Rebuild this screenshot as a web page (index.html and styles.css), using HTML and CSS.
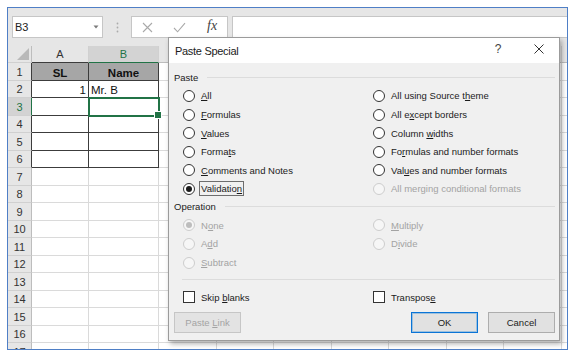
FILE: index.html
```html
<!DOCTYPE html>
<html lang="en">
<head>
<meta charset="utf-8">
<title>Paste Special</title>
<link rel="stylesheet" href="styles.css">
</head>
<body>
<div class="window">
  <div class="toolbar">
    <div class="namebox"><span class="ref">B3</span><svg class="dd" width="6" height="4" viewBox="0 0 6 4"><path d="M0.5 0.5H5.5L3 3.5Z" fill="#7a7a7a"/></svg></div>
    <div class="grip"><svg width="3" height="11" viewBox="0 0 3 11"><circle cx="1.5" cy="1.5" r="0.9" fill="#ababab"/><circle cx="1.5" cy="5.5" r="0.9" fill="#ababab"/><circle cx="1.5" cy="9.5" r="0.9" fill="#ababab"/></svg></div>
    <div class="fxbox">
      <span class="slot"><svg width="11" height="11" viewBox="0 0 11 11"><path d="M1 1L10 10M10 1L1 10" stroke="#a9a9a9" stroke-width="1.1" fill="none"/></svg></span>
      <span class="slot"><svg width="13" height="11" viewBox="0 0 13 11"><path d="M1 6L4.6 9.8L12 1.2" stroke="#a9a9a9" stroke-width="1.1" fill="none"/></svg></span>
      <span class="slot fx">fx</span>
    </div>
    <div class="formula"></div>
  </div>
  <div class="sheet">
    <div class="row"><span class="corner"></span><span class="ch ca tt">A</span><span class="ch cb sel">B</span><span class="ch"></span><span class="ch"></span><span class="ch"></span><span class="ch"></span><span class="ch"></span><span class="ch"></span><span class="ch"></span><span class="ch"></span></div>
    <div class="row"><span class="rh tl">1</span><span class="ca t th">SL</span><span class="cb t th">Name</span><span></span><span></span><span></span><span></span><span></span><span></span><span></span><span></span></div>
    <div class="row"><span class="rh tl">2</span><span class="ca t num">1</span><span class="cb t">Mr. B</span><span></span><span></span><span></span><span></span><span></span><span></span><span></span><span></span></div>
    <div class="row"><span class="rh tl sel">3</span><span class="ca t"></span><span class="cb t cur"></span><span></span><span></span><span></span><span></span><span></span><span></span><span></span><span></span></div>
    <div class="row"><span class="rh tl">4</span><span class="ca t"></span><span class="cb t"></span><span></span><span></span><span></span><span></span><span></span><span></span><span></span><span></span></div>
    <div class="row"><span class="rh tl">5</span><span class="ca t"></span><span class="cb t"></span><span></span><span></span><span></span><span></span><span></span><span></span><span></span><span></span></div>
    <div class="row"><span class="rh tl">6</span><span class="ca t"></span><span class="cb t"></span><span></span><span></span><span></span><span></span><span></span><span></span><span></span><span></span></div>
    <div class="row"><span class="rh">7</span><span class="ca"></span><span class="cb"></span><span></span><span></span><span></span><span></span><span></span><span></span><span></span><span></span></div>
    <div class="row"><span class="rh">8</span><span class="ca"></span><span class="cb"></span><span></span><span></span><span></span><span></span><span></span><span></span><span></span><span></span></div>
    <div class="row"><span class="rh">9</span><span class="ca"></span><span class="cb"></span><span></span><span></span><span></span><span></span><span></span><span></span><span></span><span></span></div>
    <div class="row"><span class="rh">10</span><span class="ca"></span><span class="cb"></span><span></span><span></span><span></span><span></span><span></span><span></span><span></span><span></span></div>
    <div class="row"><span class="rh">11</span><span class="ca"></span><span class="cb"></span><span></span><span></span><span></span><span></span><span></span><span></span><span></span><span></span></div>
    <div class="row"><span class="rh">12</span><span class="ca"></span><span class="cb"></span><span></span><span></span><span></span><span></span><span></span><span></span><span></span><span></span></div>
    <div class="row"><span class="rh">13</span><span class="ca"></span><span class="cb"></span><span></span><span></span><span></span><span></span><span></span><span></span><span></span><span></span></div>
    <div class="row"><span class="rh">14</span><span class="ca"></span><span class="cb"></span><span></span><span></span><span></span><span></span><span></span><span></span><span></span><span></span></div>
    <div class="row"><span class="rh">15</span><span class="ca"></span><span class="cb"></span><span></span><span></span><span></span><span></span><span></span><span></span><span></span><span></span></div>
    <div class="row"><span class="rh">16</span><span class="ca"></span><span class="cb"></span><span></span><span></span><span></span><span></span><span></span><span></span><span></span><span></span></div>
    <div class="row"><span class="rh">17</span><span class="ca"></span><span class="cb"></span><span></span><span></span><span></span><span></span><span></span><span></span><span></span><span></span></div>
  </div>

  <div class="dialog">
    <div class="titlebar">
      <span class="title">Paste Special</span>
      <span class="help">?</span>
      <svg class="close" width="10" height="10" viewBox="0 0 10 10"><path d="M0.5 0.5L9.5 9.5M9.5 0.5L0.5 9.5" stroke="#333" stroke-width="1" fill="none"/></svg>
    </div>
    <div class="dbody">
      <div class="group"><span>Paste</span><i class="rule"></i></div>
      <div class="opts paste">
        <div class="opt"><span class="radio"></span><span><u>A</u>ll</span></div>
        <div class="opt"><span class="radio"></span><span>All using Source t<u>h</u>eme</span></div>
        <div class="opt"><span class="radio"></span><span><u>F</u>ormulas</span></div>
        <div class="opt"><span class="radio"></span><span>All e<u>x</u>cept borders</span></div>
        <div class="opt"><span class="radio"></span><span><u>V</u>alues</span></div>
        <div class="opt"><span class="radio"></span><span>Column <u>w</u>idths</span></div>
        <div class="opt"><span class="radio"></span><span>Forma<u>t</u>s</span></div>
        <div class="opt"><span class="radio"></span><span>Fo<u>r</u>mulas and number formats</span></div>
        <div class="opt"><span class="radio"></span><span><u>C</u>omments and Notes</span></div>
        <div class="opt"><span class="radio"></span><span>Val<u>u</u>es and number formats</span></div>
        <div class="opt"><span class="radio on"></span><span class="focus">Validatio<u>n</u></span></div>
        <div class="opt dis"><span class="radio"></span><span>All merging conditional formats</span></div>
      </div>
      <div class="group"><span>Operation</span><i class="rule"></i></div>
      <div class="opts op">
        <div class="opt dis"><span class="radio on"></span><span>N<u>o</u>ne</span></div>
        <div class="opt dis"><span class="radio"></span><span><u>M</u>ultiply</span></div>
        <div class="opt dis"><span class="radio"></span><span>A<u>d</u>d</span></div>
        <div class="opt dis"><span class="radio"></span><span>D<u>i</u>vide</span></div>
        <div class="opt dis"><span class="radio"></span><span><u>S</u>ubtract</span></div>
      </div>
      <div class="sep"></div>
      <div class="opts checks">
        <div class="opt"><span class="check"></span><span>Skip <u>b</u>lanks</span></div>
        <div class="opt"><span class="check"></span><span>Transpos<u>e</u></span></div>
      </div>
      <div class="buttons">
        <span class="btn disabled"><span>Paste <u>L</u>ink</span></span>
        <div class="btngroup">
          <span class="btn default"><span>OK</span></span>
          <span class="btn"><span>Cancel</span></span>
        </div>
      </div>
    </div>
  </div>
</div>
</body>
</html>
```

FILE: styles.css
```css
* { box-sizing: border-box; }
html, body { margin: 0; padding: 0; background: #fff; }
body { font-family: "Liberation Sans", Arial, sans-serif; color: #1b1b1b; }

.window {
  position: relative;
  margin: 7px 0 0 7px;
  width: 561px;
  height: 343px;
  border: 1px solid #4f7fc6;
  overflow: hidden;
  background: #fff;
}

/* formula bar */
.toolbar {
  height: 38px;
  background: #e6e6e6;
  display: flex;
  align-items: flex-start;
  padding: 8px 0 0 4px;
}
.namebox {
  width: 91px;
  height: 22px;
  flex: none;
  background: #fff;
  border: 1px solid #c6c6c6;
  display: flex;
  align-items: center;
  padding: 0 3px 0 2px;
  font-size: 11px;
  color: #222;
}
.namebox .ref { flex: 1; }
.grip {
  width: 28px;
  height: 22px;
  flex: none;
  display: flex;
  align-items: center;
  justify-content: center;
}
.fxbox {
  width: 97px;
  height: 22px;
  flex: none;
  background: #fff;
  border: 1px solid #c6c6c6;
  display: flex;
  align-items: center;
}
.slot {
  width: 32px;
  display: flex;
  justify-content: center;
  align-items: center;
}
.fx {
  font-family: "Liberation Serif", "Times New Roman", serif;
  font-style: italic;
  font-size: 14px;
  color: #444;
  padding-left: 2px;
  margin-top: -2px;
}
.formula {
  flex: 1;
  height: 22px;
  margin-left: 4px;
  background: #fff;
  border: 1px solid #c6c6c6;
  border-right: none;
}

/* sheet grid */
.sheet { display: flex; flex-direction: column; }
.row { display: flex; height: 17px; flex: none; }
.row:nth-child(even) { height: 18px; }
.row > span {
  flex: none;
  width: 57.5px;
  border-right: 1px solid #dadada;
  border-bottom: 1px solid #dadada;
  font-size: 11.5px;
  display: flex;
  align-items: flex-end;
  padding: 0 2px 1px;
  white-space: nowrap;
  overflow: hidden;
  color: #111;
}
.row > .ca { width: 57px; }
.row > .cb { width: 70px; }
.row > .rh, .row > .corner {
  width: 24px;
  background: #e6e6e6;
  border-right-color: #bdbdbd;
  border-bottom-color: #d0d0d0;
  justify-content: center;
  align-items: center;
  font-size: 11px;
  color: #333;
  padding: 0;
}
.row > .corner { position: relative; }
.corner::after {
  content: "";
  position: absolute;
  right: 2px;
  bottom: 2px;
  border-left: 12px solid transparent;
  border-bottom: 12px solid #b9b9b9;
}
.row > .ch {
  background: #e6e6e6;
  border-right-color: #d0d0d0;
  border-bottom-color: #bdbdbd;
  justify-content: center;
  align-items: center;
  font-size: 11px;
  color: #333;
  padding: 0;
}
.row > .ch.tt { border-bottom-color: #3c3c3c; }
.row > .ch.sel {
  background: #d3d3d3;
  color: #217346;
  border-bottom-color: #217346;
}
.row > .rh.tl { border-right-color: #3c3c3c; }
.row > .rh.sel {
  background: #d3d3d3;
  color: #217346;
  border-right-color: #217346;
}
.row > .t {
  border-right-color: #3c3c3c;
  border-bottom-color: #3c3c3c;
}
.row > .th {
  background: #a6a6a6;
  font-weight: bold;
  justify-content: center;
}
.row > .num { justify-content: flex-end; }
.row > .cur {
  position: relative;
  overflow: visible;
  z-index: 1;
  outline: 2px solid #217346;
  outline-offset: -1px;
}
.cur::after {
  content: "";
  position: absolute;
  right: -4px;
  bottom: -4px;
  width: 6px;
  height: 6px;
  background: #217346;
  border: 1px solid #fff;
}

/* dialog */
.dialog {
  position: absolute;
  left: 160px;
  top: 29px;
  width: 392px;
  height: 304px;
  border: 1px solid #9b9b9b;
  background: #f0f0f0;
  box-shadow: 2px 3px 5px rgba(0, 0, 0, 0.3);
  font-size: 9.5px;
  color: #1b1b1b;
  display: flex;
  flex-direction: column;
  z-index: 5;
}
.titlebar {
  height: 25px;
  flex: none;
  background: #fff;
  display: flex;
  align-items: center;
  padding: 0 15px 0 6px;
}
.title {
  font-size: 11px;
  letter-spacing: -0.3px;
  color: #1b1b1b;
  flex: 1;
  padding-top: 1px;
}
.help {
  width: 10px;
  text-align: center;
  font-size: 12px;
  color: #444;
  margin-right: 31px;
  margin-bottom: 4px;
}
.close { margin-bottom: 4px; }
.dbody {
  flex: 1;
  display: flex;
  flex-direction: column;
  padding: 0 4px 0 5px;
}
.group {
  display: flex;
  align-items: center;
  gap: 9px;
  height: 12px;
  margin-top: 8px;
}
.group + .opts.op { margin-top: 3.3px; }
.opts.op + .sep { margin-top: 7px; }
.paste + .group { margin-top: 2.4px; }
.rule {
  flex: 1;
  height: 1px;
  background: #dcdcdc;
}
.opts {
  display: grid;
  grid-template-columns: 190px 1fr;
  margin-left: 9px;
}
.opts.paste { grid-auto-rows: 18.6px; margin-top: 3.7px; }
.opts.op { grid-auto-rows: 18.7px; }
.opts.checks { grid-auto-rows: 12px; margin-top: 11px; }
.opt {
  display: flex;
  align-items: center;
  gap: 6px;
  white-space: nowrap;
}
.opt u, .btn u { text-underline-offset: 1px; }
.opt.dis { color: #a3a3a3; }
.radio {
  width: 12px;
  height: 12px;
  flex: none;
  border: 1px solid #333;
  border-radius: 50%;
  background: #fff;
  display: flex;
  align-items: center;
  justify-content: center;
}
.radio.on::after {
  content: "";
  width: 6px;
  height: 6px;
  border-radius: 50%;
  background: #1b1b1b;
}
.dis .radio { border-color: #cdcdcd; background: #f6f6f6; }
.dis .radio.on::after { background: #bdbdbd; }
.focus { outline: 1px solid #6d6d6d; outline-offset: 1px; }
.check {
  width: 12px;
  height: 12px;
  flex: none;
  border: 1px solid #333;
  background: #fff;
}
.sep {
  height: 1px;
  flex: none;
  background: #dcdcdc;
  margin-left: 8px;
}
.buttons {
  display: flex;
  justify-content: space-between;
  margin-top: 9px;
}
.btngroup { display: flex; gap: 10px; }
.btn {
  width: 67px;
  height: 21px;
  border: 1px solid #adadad;
  background: #e1e1e1;
  display: flex;
  align-items: center;
  justify-content: center;
  font-size: 9.5px;
  color: #1b1b1b;
  white-space: nowrap;
}
.btn.disabled { color: #a3a3a3; border-color: #c6c6c6; background: #e3e3e3; }
.btn.default { border-color: #0a74d6; box-shadow: inset 0 0 0 1px rgba(0, 120, 215, 0.3); }
```
